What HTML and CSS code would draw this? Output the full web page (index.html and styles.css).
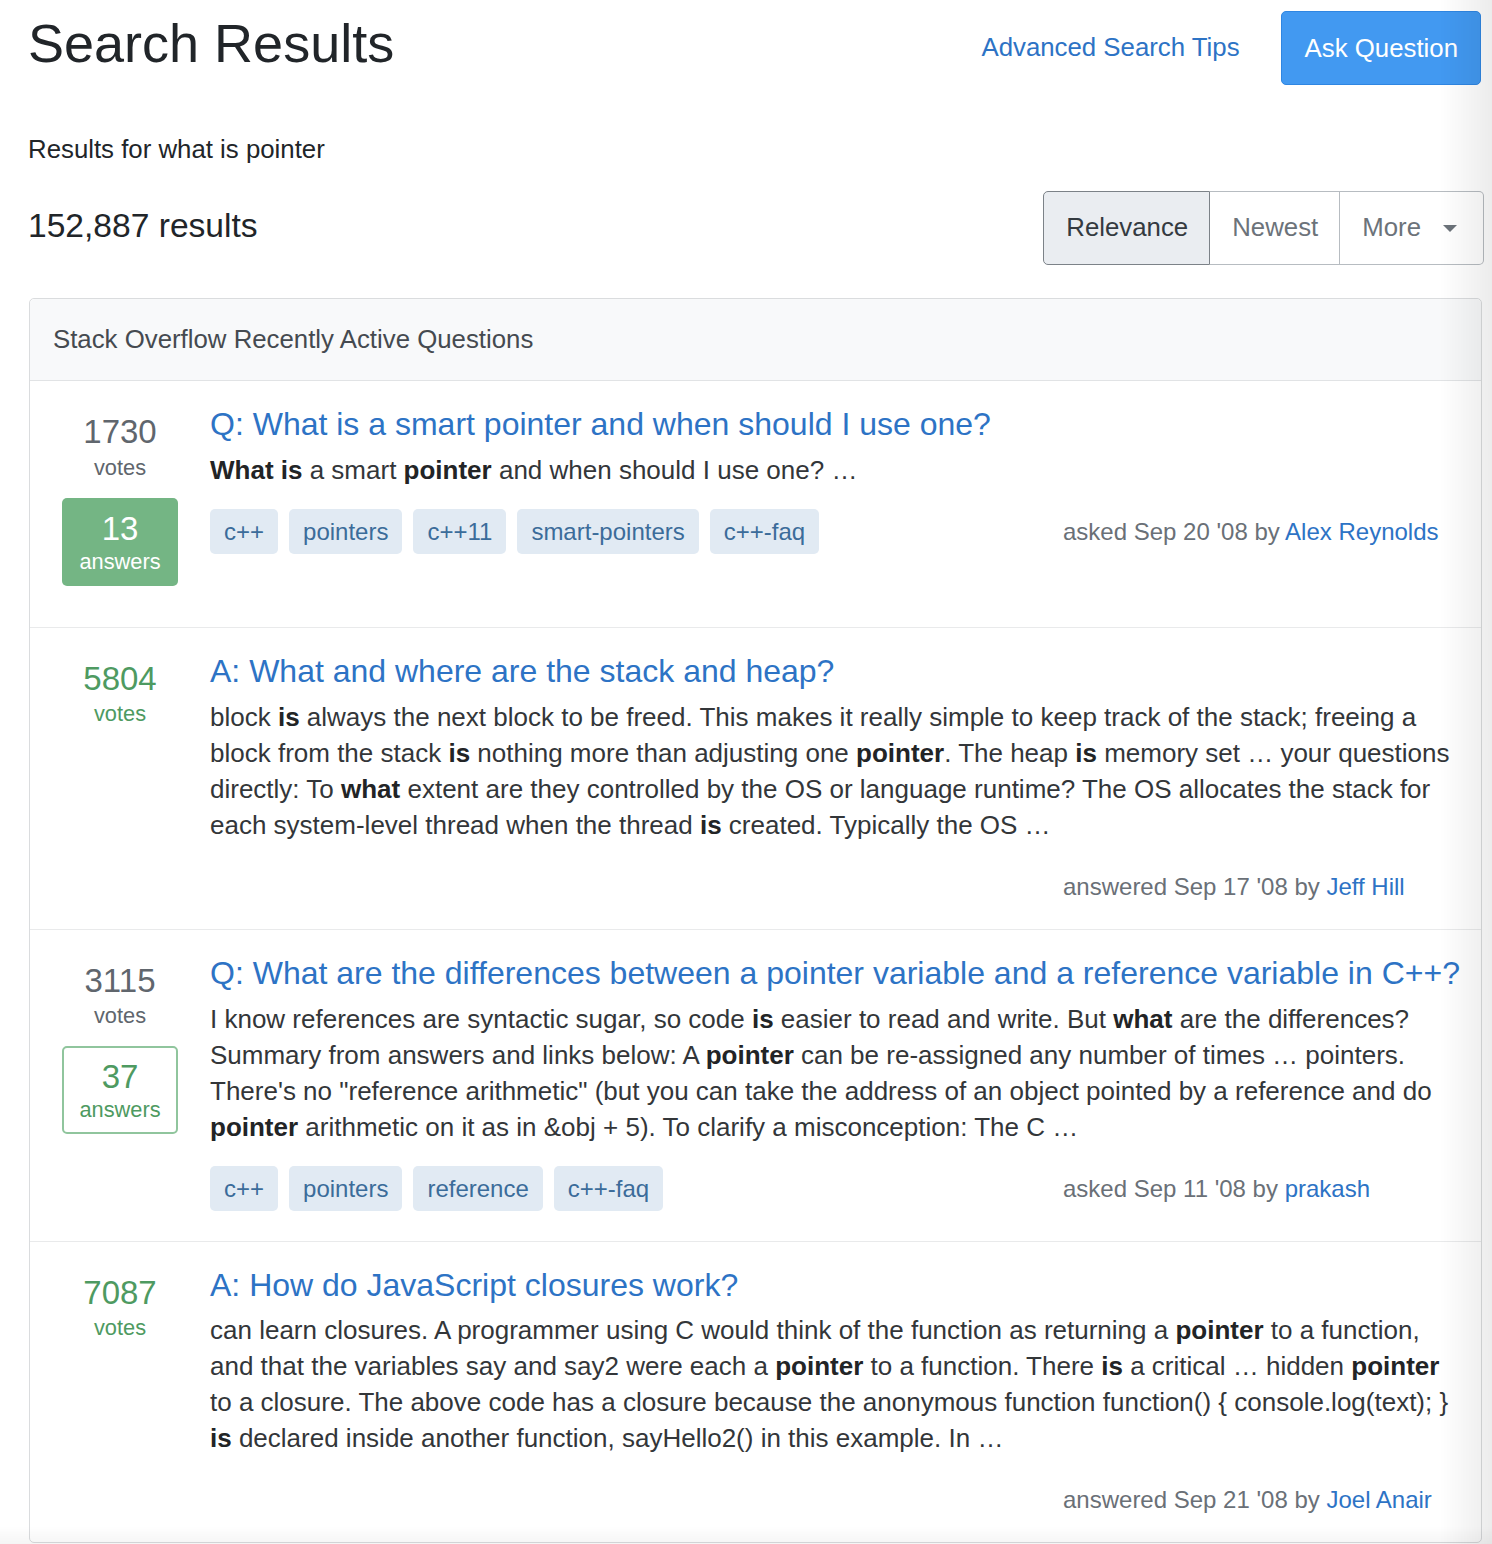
FILE: index.html
```html
<!DOCTYPE html>
<html lang="en">
<head>
<meta charset="utf-8">
<title>Search Results</title>
<link rel="stylesheet" href="styles.css">
</head>
<body>
<div class="page">
  <header class="top">
    <h1 class="page-title">Search Results</h1>
    <div class="top-actions">
      <a class="tips-link" href="#">Advanced Search Tips</a>
      <a class="ask-btn" href="#">Ask Question</a>
    </div>
  </header>

  <p class="query">Results for what is pointer</p>

  <div class="results-bar">
    <div class="results-count">152,887 results</div>
    <div class="sort-group">
      <span class="sort-btn active">Relevance</span>
      <span class="sort-btn">Newest</span>
      <span class="sort-btn more">More <span class="caret"></span></span>
    </div>
  </div>

  <section class="card">
    <div class="card-header">Stack Overflow Recently Active Questions</div>

    <article class="item">
      <div class="stats">
        <div class="vote-count">1730</div>
        <div class="vote-label">votes</div>
        <div class="answers accepted">
          <div class="answers-count">13</div>
          <div class="answers-label">answers</div>
        </div>
      </div>
      <div class="summary">
        <a class="q-title" href="#">Q: What is a smart pointer and when should I use one?</a>
        <p class="excerpt"><b>What is</b> a smart <b>pointer</b> and when should I use one? …</p>
        <div class="foot">
          <div class="tags">
            <span class="tag">c++</span>
            <span class="tag">pointers</span>
            <span class="tag">c++11</span>
            <span class="tag">smart-pointers</span>
            <span class="tag">c++-faq</span>
          </div>
          <div class="meta">asked Sep 20 '08 by <a href="#">Alex Reynolds</a></div>
        </div>
      </div>
    </article>

    <article class="item">
      <div class="stats">
        <div class="vote-count positive">5804</div>
        <div class="vote-label positive">votes</div>
      </div>
      <div class="summary">
        <a class="q-title" href="#">A: What and where are the stack and heap?</a>
        <p class="excerpt">block <b>is</b> always the next block to be freed. This makes it really simple to keep track of the stack; freeing a block from the stack <b>is</b> nothing more than adjusting one <b>pointer</b>. The heap <b>is</b> memory set … your questions directly: To <b>what</b> extent are they controlled by the OS or language runtime? The OS allocates the stack for each system-level thread when the thread <b>is</b> created. Typically the OS …</p>
        <div class="foot">
          <div class="tags"></div>
          <div class="meta">answered Sep 17 '08 by <a href="#">Jeff Hill</a></div>
        </div>
      </div>
    </article>

    <article class="item">
      <div class="stats">
        <div class="vote-count">3115</div>
        <div class="vote-label">votes</div>
        <div class="answers outlined">
          <div class="answers-count">37</div>
          <div class="answers-label">answers</div>
        </div>
      </div>
      <div class="summary">
        <a class="q-title" href="#">Q: What are the differences between a pointer variable and a reference variable in C++?</a>
        <p class="excerpt">I know references are syntactic sugar, so code <b>is</b> easier to read and write. But <b>what</b> are the differences? Summary from answers and links below: A <b>pointer</b> can be re-assigned any number of times … pointers. There's no "reference arithmetic" (but you can take the address of an object pointed by a reference and do <b>pointer</b> arithmetic on it as in &amp;obj + 5). To clarify a misconception: The C …</p>
        <div class="foot">
          <div class="tags">
            <span class="tag">c++</span>
            <span class="tag">pointers</span>
            <span class="tag">reference</span>
            <span class="tag">c++-faq</span>
          </div>
          <div class="meta">asked Sep 11 '08 by <a href="#">prakash</a></div>
        </div>
      </div>
    </article>

    <article class="item">
      <div class="stats">
        <div class="vote-count positive">7087</div>
        <div class="vote-label positive">votes</div>
      </div>
      <div class="summary">
        <a class="q-title" href="#">A: How do JavaScript closures work?</a>
        <p class="excerpt">can learn closures. A programmer using C would think of the function as returning a <b>pointer</b> to a function, and that the variables say and say2 were each a <b>pointer</b> to a function. There <b>is</b> a critical … hidden <b>pointer</b> to a closure. The above code has a closure because the anonymous function function() { console.log(text); } <b>is</b> declared inside another function, sayHello2() in this example. In …</p>
        <div class="foot">
          <div class="tags"></div>
          <div class="meta">answered Sep 21 '08 by <a href="#">Joel Anair</a></div>
        </div>
      </div>
    </article>
  </section>
</div>
</body>
</html>
```

FILE: styles.css
```css
* { box-sizing: border-box; }

html, body {
  margin: 0;
  padding: 0;
  background: #ffffff;
}

body {
  font-family: "Liberation Sans", Arial, Helvetica, sans-serif;
  font-size: 25.8px;
  line-height: 1.5;
  color: #212529;
}

body::after {
  content: "";
  position: fixed;
  inset: 0;
  pointer-events: none;
  background:
    linear-gradient(to right, rgba(0,0,0,0) calc(100% - 52px), rgba(0,0,0,0.075) 100%),
    linear-gradient(to bottom, rgba(0,0,0,0) calc(100% - 18px), rgba(0,0,0,0.04) 100%);
}

a { text-decoration: none; }

.page {
  padding: 0 10px 0 28px;
  height: 1544px;
  overflow: hidden;
}

/* ---------- header ---------- */
.top {
  display: flex;
  justify-content: space-between;
  align-items: flex-start;
}

.page-title {
  margin: 11px 0 0 0;
  font-size: 54px;
  font-weight: 400;
  line-height: 1.2;
  color: #212529;
}

.top-actions {
  display: flex;
  align-items: center;
  gap: 41px;
  margin-top: 11px;
  margin-right: 1px;
}

.tips-link {
  color: #2d73c5;
  font-size: 25.8px;
  line-height: 1.5;
  margin-bottom: 2px;
}

.ask-btn {
  display: inline-block;
  height: 74px;
  padding: 0 22px 0 23px;
  line-height: 72px;
  font-size: 25.8px;
  color: #ffffff;
  background: #4299f1;
  border: 1px solid #2f86e2;
  border-radius: 5px;
}

.query {
  margin: 45px 0 0 0;
  font-size: 25.8px;
  line-height: 38.7px;
}

/* ---------- results bar ---------- */
.results-bar {
  display: flex;
  justify-content: space-between;
  align-items: center;
  margin-top: 22px;
  margin-right: -2px;
}

.results-count {
  font-size: 33.6px;
  line-height: 1.2;
  padding-bottom: 3px;
}

.sort-group {
  display: flex;
  height: 74px;
}

.sort-btn {
  display: flex;
  align-items: center;
  padding: 0 21px 0 22px;
  font-size: 25.8px;
  color: #6c737a;
  border: 1px solid #b7bcc1;
  border-left-width: 0;
  background: #ffffff;
}

.sort-btn.active {
  color: #343a40;
  background: #eaedf1;
  border: 1px solid #7c8288;
  border-radius: 5px 0 0 5px;
}

.sort-btn.more {
  border-radius: 0 5px 5px 0;
  padding-right: 26px;
  gap: 22px;
}

.caret {
  display: inline-block;
  width: 0;
  height: 0;
  border-top: 7px solid #6c737a;
  border-left: 7px solid transparent;
  border-right: 7px solid transparent;
  margin-top: 2px;
}

/* ---------- card ---------- */
.card {
  margin: 33px 0 0 1px;
  border: 1px solid #dadcde;
  border-radius: 5px;
  background: #ffffff;
}

.card-header {
  padding: 21px 23px 22px;
  font-size: 25.8px;
  line-height: 38.7px;
  color: #454a50;
  background: #f8f9fa;
  border-bottom: 1px solid #e1e3e5;
  border-radius: 5px 5px 0 0;
}

.item {
  display: flex;
  gap: 24px;
  padding: 24px 19px 20px 24px;
  border-bottom: 1px solid #e9eaeb;
}

.item:last-child { border-bottom: 0; }

.stats {
  flex: 0 0 132px;
  display: flex;
  flex-direction: column;
  align-items: center;
  padding-top: 7px;
  padding-bottom: 21px;
}

.vote-count {
  font-size: 33px;
  line-height: 1.2;
  color: #60666d;
}

.vote-label {
  font-size: 21.8px;
  line-height: 32.7px;
  color: #60666d;
}

.positive { color: #4e9a61; }

.answers {
  width: 116px;
  height: 88px;
  margin-top: 13px;
  border-radius: 5px;
  display: flex;
  flex-direction: column;
  align-items: center;
  justify-content: center;
}

.answers.accepted {
  background: #74b584;
  color: #ffffff;
}

.answers.outlined {
  border: 2px solid #90c59d;
  color: #4e9a61;
}

.answers-count {
  font-size: 33px;
  line-height: 1.2;
}

.answers-label {
  font-size: 21.8px;
  line-height: 26px;
}

.summary {
  flex: 1 1 auto;
  min-width: 0;
}

.q-title {
  display: block;
  font-size: 32px;
  line-height: 38.4px;
  color: #2d73c5;
}

.excerpt {
  margin: 8.5px 0 0 0;
  font-size: 26px;
  line-height: 36px;
  color: #333639;
}

.excerpt b {
  font-weight: 700;
  color: #222426;
}

.foot {
  display: flex;
  align-items: flex-start;
  margin-top: 21px;
}

.tags {
  flex: 0 0 853px;
  display: flex;
  flex-wrap: wrap;
  gap: 0 11px;
}

.tag {
  display: inline-block;
  height: 45px;
  line-height: 45px;
  padding: 0 14px;
  margin-bottom: 10px;
  font-size: 24px;
  color: #3b6c9a;
  background: #e1eaf3;
  border-radius: 5px;
}

.meta {
  font-size: 24px;
  line-height: 45px;
  color: #6a7077;
  white-space: nowrap;
}

.meta a { color: #2d73c5; }
```
